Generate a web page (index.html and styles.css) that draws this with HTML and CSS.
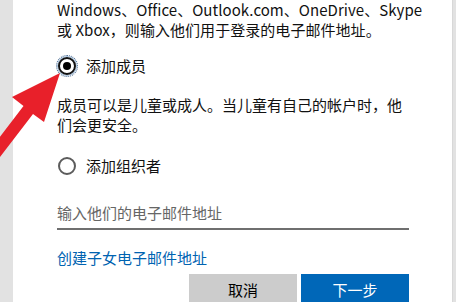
FILE: index.html
```html
<!DOCTYPE html>
<html lang="zh-CN">
<head>
<meta charset="utf-8">
<link rel="stylesheet" href="styles.css">
</head>
<body>
<div class="panel">
  <p class="intro">Windows、Office、Outlook.com、OneDrive、Skype<br>或 Xbox，则输入他们用于登录的电子邮件地址。</p>
  <div class="option option-first">
    <span class="radio radio-checked"><span class="dot"></span></span>
    <span class="label">添加成员</span>
  </div>
  <p class="desc">成员可以是儿童或成人。当儿童有自己的帐户时，他们会更安全。</p>
  <div class="option option-second">
    <span class="radio"></span>
    <span class="label">添加组织者</span>
  </div>
  <div class="field">输入他们的电子邮件地址</div>
  <a class="link">创建子女电子邮件地址</a>
  <div class="buttons">
    <span class="btn btn-cancel">取消</span>
    <span class="btn btn-next">下一步</span>
  </div>
</div>
<svg class="arrow" width="70" height="180" viewBox="0 0 70 180">
  <polygon points="60,73 12,97 23.5,106 -10,150 -10,170 33,114 44,122" fill="#e8202a"/>
</svg>
</body>
</html>
```
FILE: styles.css
```css
html, body {
  margin: 0;
  padding: 0;
}
body {
  width: 456px;
  height: 302px;
  overflow: hidden;
  background: #e2e2e2;
  display: flex;
  position: relative;
  font-family: "Noto Sans CJK SC", sans-serif;
  font-size: 15px;
  line-height: 20px;
  color: #111;
}
.panel {
  margin-left: 13px;
  width: 395px;
  height: 302px;
  overflow: hidden;
  background: #fff;
  padding-left: 44px;
  border-right: 1px solid #d8d8d8;
  display: flex;
  flex-direction: column;
  align-items: stretch;
}
.panel > * {
  width: 352px;
  flex: none;
}
p {
  margin: 0;
}
.intro {
  margin-top: 0;
  white-space: nowrap;
  letter-spacing: 0.05px;
}
.option {
  display: flex;
  align-items: center;
  height: 20px;
}
.option-first {
  margin-top: 16px;
}
.option-second {
  margin-top: 21px;
}
.radio {
  width: 14px;
  height: 14px;
  border: 2px solid #5c5c5c;
  border-radius: 50%;
  display: flex;
  align-items: center;
  justify-content: center;
  margin-left: 1px;
  flex: none;
}
.radio-checked {
  border-color: #111;
  box-shadow: 0 0 0 1px rgba(60, 120, 180, 0.45);
  outline: 1px dotted #3a5f8a;
  outline-offset: 1px;
}
.dot {
  width: 8px;
  height: 8px;
  border-radius: 50%;
  background: #000;
}
.label {
  margin-left: 10px;
}
.desc {
  margin-top: 19px;
}
.field {
  margin-top: 22px;
  padding: 5px 0;
  border-bottom: 2px solid #6f6f6f;
  color: #666;
}
.link {
  margin-top: 18px;
  color: #0063b1;
}
.buttons {
  margin-top: 6px;
  display: flex;
  justify-content: flex-end;
  gap: 4px;
}
.btn {
  width: 108px;
  height: 32px;
  display: flex;
  justify-content: center;
  padding-top: 6px;
  box-sizing: border-box;
}
.btn-cancel {
  background: #cccccc;
  color: #000;
}
.btn-next {
  background: #0067b8;
  color: #fff;
}
.arrow {
  position: absolute;
  left: 0;
  top: 0;
}
```
